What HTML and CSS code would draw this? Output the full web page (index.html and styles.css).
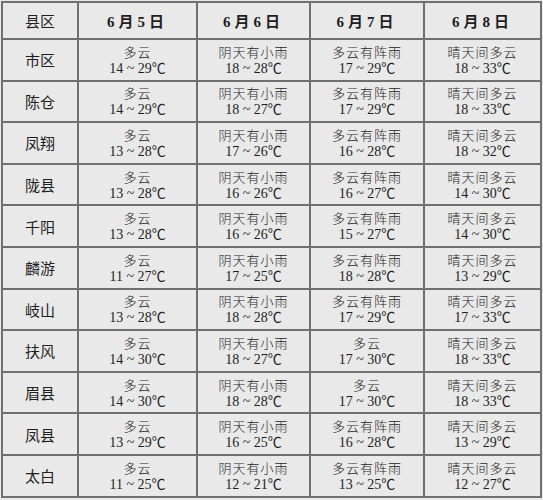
FILE: index.html
```html
<!DOCTYPE html>
<html lang="zh">
<head>
<meta charset="utf-8">
<title>天气预报</title>
<link rel="stylesheet" href="styles.css">
</head>
<body>
<table class="forecast">
  <colgroup>
    <col class="c-name"><col class="c-d1"><col class="c-d2"><col class="c-d3"><col class="c-d4">
  </colgroup>
  <thead>
    <tr class="head">
      <th class="name">县区</th>
      <th class="date">6月5日</th>
      <th class="date">6月6日</th>
      <th class="date">6月7日</th>
      <th class="date">6月8日</th>
    </tr>
  </thead>
  <tbody>
    <tr><th class="name">市区</th>
      <td><div class="w">多云</div><div class="t">14 ~ 29℃</div></td>
      <td><div class="w">阴天有小雨</div><div class="t">18 ~ 28℃</div></td>
      <td><div class="w">多云有阵雨</div><div class="t">17 ~ 29℃</div></td>
      <td><div class="w">晴天间多云</div><div class="t">18 ~ 33℃</div></td></tr>
    <tr><th class="name">陈仓</th>
      <td><div class="w">多云</div><div class="t">14 ~ 29℃</div></td>
      <td><div class="w">阴天有小雨</div><div class="t">18 ~ 27℃</div></td>
      <td><div class="w">多云有阵雨</div><div class="t">17 ~ 29℃</div></td>
      <td><div class="w">晴天间多云</div><div class="t">18 ~ 33℃</div></td></tr>
    <tr><th class="name">凤翔</th>
      <td><div class="w">多云</div><div class="t">13 ~ 28℃</div></td>
      <td><div class="w">阴天有小雨</div><div class="t">17 ~ 26℃</div></td>
      <td><div class="w">多云有阵雨</div><div class="t">16 ~ 28℃</div></td>
      <td><div class="w">晴天间多云</div><div class="t">18 ~ 32℃</div></td></tr>
    <tr><th class="name">陇县</th>
      <td><div class="w">多云</div><div class="t">13 ~ 28℃</div></td>
      <td><div class="w">阴天有小雨</div><div class="t">16 ~ 26℃</div></td>
      <td><div class="w">多云有阵雨</div><div class="t">16 ~ 27℃</div></td>
      <td><div class="w">晴天间多云</div><div class="t">14 ~ 30℃</div></td></tr>
    <tr><th class="name">千阳</th>
      <td><div class="w">多云</div><div class="t">13 ~ 28℃</div></td>
      <td><div class="w">阴天有小雨</div><div class="t">16 ~ 26℃</div></td>
      <td><div class="w">多云有阵雨</div><div class="t">15 ~ 27℃</div></td>
      <td><div class="w">晴天间多云</div><div class="t">14 ~ 30℃</div></td></tr>
    <tr><th class="name">麟游</th>
      <td><div class="w">多云</div><div class="t">11 ~ 27℃</div></td>
      <td><div class="w">阴天有小雨</div><div class="t">17 ~ 25℃</div></td>
      <td><div class="w">多云有阵雨</div><div class="t">18 ~ 28℃</div></td>
      <td><div class="w">晴天间多云</div><div class="t">13 ~ 29℃</div></td></tr>
    <tr><th class="name">岐山</th>
      <td><div class="w">多云</div><div class="t">13 ~ 28℃</div></td>
      <td><div class="w">阴天有小雨</div><div class="t">18 ~ 28℃</div></td>
      <td><div class="w">多云有阵雨</div><div class="t">17 ~ 29℃</div></td>
      <td><div class="w">晴天间多云</div><div class="t">17 ~ 33℃</div></td></tr>
    <tr><th class="name">扶风</th>
      <td><div class="w">多云</div><div class="t">14 ~ 30℃</div></td>
      <td><div class="w">阴天有小雨</div><div class="t">18 ~ 27℃</div></td>
      <td><div class="w">多云</div><div class="t">17 ~ 30℃</div></td>
      <td><div class="w">晴天间多云</div><div class="t">18 ~ 33℃</div></td></tr>
    <tr><th class="name">眉县</th>
      <td><div class="w">多云</div><div class="t">14 ~ 30℃</div></td>
      <td><div class="w">阴天有小雨</div><div class="t">18 ~ 28℃</div></td>
      <td><div class="w">多云</div><div class="t">17 ~ 30℃</div></td>
      <td><div class="w">晴天间多云</div><div class="t">18 ~ 33℃</div></td></tr>
    <tr><th class="name">凤县</th>
      <td><div class="w">多云</div><div class="t">13 ~ 29℃</div></td>
      <td><div class="w">阴天有小雨</div><div class="t">16 ~ 25℃</div></td>
      <td><div class="w">多云有阵雨</div><div class="t">16 ~ 28℃</div></td>
      <td><div class="w">晴天间多云</div><div class="t">13 ~ 29℃</div></td></tr>
    <tr><th class="name">太白</th>
      <td><div class="w">多云</div><div class="t">11 ~ 25℃</div></td>
      <td><div class="w">阴天有小雨</div><div class="t">12 ~ 21℃</div></td>
      <td><div class="w">多云有阵雨</div><div class="t">13 ~ 25℃</div></td>
      <td><div class="w">晴天间多云</div><div class="t">12 ~ 27℃</div></td></tr>
  </tbody>
</table>
</body>
</html>
```

FILE: styles.css
```css
html, body {
  margin: 0;
  padding: 0;
  background: #e9e9e9;
}
body {
  padding: 1px 0 0 1px;
  font-family: "Liberation Serif", "Noto Sans CJK SC", serif;
  color: #1e1e1e;
}
.forecast {
  border-collapse: collapse;
  table-layout: fixed;
  width: 541px;
  border: 2px solid #5e5e5e;
}
.c-name { width: 76px; }
.c-d1 { width: 119px; }
.c-d2 { width: 113px; }
.c-d3 { width: 114px; }
.c-d4 { width: 117px; }
.forecast th,
.forecast td {
  border: 2px solid #707070;
  padding: 0;
  text-align: center;
  vertical-align: middle;
}
.head {
  height: 37px;
}
tbody tr {
  height: 41.6px;
}
.name {
  font-family: "Noto Sans CJK SC", sans-serif;
  font-weight: 400;
  font-size: 15px;
  letter-spacing: 0;
}
.date {
  font-family: "Liberation Serif", "Noto Sans CJK SC", serif;
  font-weight: 700;
  font-size: 15px;
  letter-spacing: 4px;
}
.w {
  font-family: "Noto Sans CJK SC", sans-serif;
  font-size: 13px;
  letter-spacing: 1px;
  line-height: 17px;
  font-weight: 300;
}
.t {
  font-size: 14px;
  line-height: 17px;
  letter-spacing: 0;
}
```
